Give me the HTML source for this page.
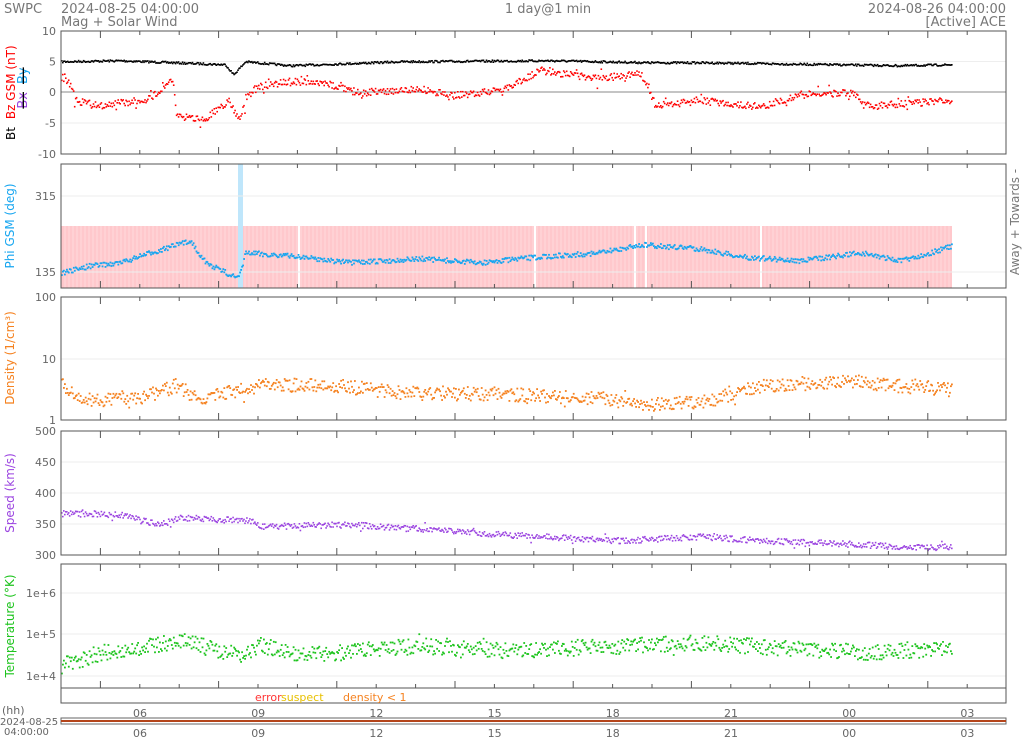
<!DOCTYPE html>
<html><head><meta charset="utf-8"><style>
html,body{margin:0;padding:0;background:#fff;width:1024px;height:741px;overflow:hidden}
svg{display:block;font-family:"DejaVu Sans","Liberation Sans",sans-serif}
</style></head><body>
<svg id="s" width="1024" height="741" xmlns="http://www.w3.org/2000/svg">
<g font-size="13" fill="#777">
<text x="4" y="13">SWPC</text>
<text x="61" y="13">2024-08-25 04:00:00</text>
<text x="61" y="26">Mag + Solar Wind</text>
<text x="548" y="13" text-anchor="middle">1 day@1 min</text>
<text x="1006" y="13" text-anchor="end">2024-08-26 04:00:00</text>
<text x="1006" y="26" text-anchor="end">[Active] ACE</text>
</g>
<g id="g"></g>
</svg>
<script>
var h='';
var X0=61,X1=1006,PH=39.4,XE=952;
var seed=7;function r(){seed=(seed*16807)%2147483647;return seed/2147483647;}
var panels=[[31,154],[164,288],[297,420],[431,555],[564,688]];
function ticks(t,b){var s='';for(var i=0;i<25;i++){var x=X0+i*PH;if(x>X1)break;var L=((i+2)%3==0)?7:4;s+='<line x1="'+x+'" y1="'+t+'" x2="'+x+'" y2="'+(t+L)+'" stroke="#555"/><line x1="'+x+'" y1="'+b+'" x2="'+x+'" y2="'+(b-L)+'" stroke="#555"/>';}return s;}
function hl(y,c){return '<line x1="'+X0+'" y1="'+y+'" x2="'+X1+'" y2="'+y+'" stroke="'+c+'"/>';}
function lab(y,t){return '<text x="56" y="'+(y+4)+'" text-anchor="end" font-size="11" fill="#666">'+t+'</text>';}
h+=hl(61.5,'#eee')+hl(123,'#eee')+hl(92,'#888');
[[31,'10'],[61.5,'5'],[92,'0'],[123,'-5'],[154,'-10']].forEach(function(a){h+=lab(a[0],a[1]);});
h+='<rect x="'+X0+'" y="226" width="'+(XE-X0)+'" height="62" fill="#ffc8cc"/>';
for(var x=X0;x<XE;x+=4)h+='<line x1="'+x+'" y1="226" x2="'+x+'" y2="288" stroke="#ffdadd" stroke-width="1"/>';
[298,534,634,645,760].forEach(function(x){h+='<rect x="'+x+'" y="226" width="2" height="62" fill="#fff"/>';});
h+='<rect x="238" y="164" width="5" height="124" fill="#bfe6fb"/>';
h+=hl(196,'#eee')+hl(272,'#eee');h+=lab(196,'315')+lab(272,'135');
h+=hl(359,'#eee');h+=lab(297,'100')+lab(359,'10')+lab(420,'1');
h+=hl(462,'#eee')+hl(493,'#eee')+hl(524,'#eee');
[[431,'500'],[462,'450'],[493,'400'],[524,'350'],[555,'300']].forEach(function(a){h+=lab(a[0],a[1]);});
h+=hl(593,'#eee')+hl(634,'#eee')+hl(676,'#eee');h+=lab(593,'1e+6')+lab(634,'1e+5')+lab(676,'1e+4');
function dots(fn,c,n,sz,sp){var s='<g fill="'+c+'">';for(var i=0;i<n;i++){var x=X0+(XE-X0)*i/n;var y=fn(x,i);if(y==null)continue;if(sp&&r()<sp){y+=(r()-0.5)*sp*200;}s+='<rect x="'+x.toFixed(1)+'" y="'+y.toFixed(1)+'" width="'+sz+'" height="'+sz+'"/>';}return s+'</g>';}
function pw(pts){return function(x){for(var i=1;i<pts.length;i++){if(x<=pts[i][0]){var a=pts[i-1],b=pts[i];return a[1]+(b[1]-a[1])*(x-a[0])/(b[0]-a[0]);}}return pts[pts.length-1][1];};}
var bt=pw([[61,61],[120,60],[200,63],[225,64],[233,74],[245,61],[290,65],[400,61],[550,60],[650,62],[700,62],[900,65],[952,64]]);
h+=dots(function(x){return bt(x)+(r()-0.5)*2;},'#000',900,1.6);
var bz=pw([[61,78],[70,84],[75,100],[100,105],[150,98],[160,88],[172,78],[176,116],[205,118],[228,100],[238,118],[250,90],[260,86],[290,80],[330,84],[360,92],[420,88],[450,95],[500,90],[540,70],[600,78],[640,72],[655,105],[700,100],[760,106],[800,94],[850,92],[870,106],[900,103],[952,100]]);
h+=dots(function(x){return bz(x)+(r()-0.5)*7;},'#f00',900,1.6,0.08);
var phi=pw([[61,272],[90,265],[120,262],[150,252],[190,240],[205,262],[238,278],[245,252],[300,256],[350,262],[420,258],[480,262],[540,256],[600,252],[640,244],[700,248],[740,256],[800,260],[860,252],[900,260],[930,252],[952,245]]);
h+=dots(function(x){return phi(x)+(r()-0.5)*5;},'#17a6f0',900,1.8);
var den=pw([[61,384],[80,400],[150,395],[175,385],[200,398],[260,385],[330,384],[400,392],[500,393],[600,398],[650,403],[700,402],[760,385],[850,380],[900,385],[952,389]]);
h+=dots(function(x){return den(x)+(r()-0.5)*14;},'#f58220',900,1.8,0.06);
var sp=pw([[61,513],[120,514],[160,524],[180,517],[250,520],[260,526],[350,524],[430,529],[500,534],[560,537],[620,540],[700,536],[760,540],[840,543],[920,547],[952,546]]);
h+=dots(function(x){return sp(x)+(r()-0.5)*6;},'#9b44e0',900,1.6,0.05);
var tp=pw([[61,665],[100,652],[180,640],[240,655],[260,644],[300,655],[420,645],[500,650],[600,646],[700,642],[800,648],[870,652],[952,647]]);
h+=dots(function(x){return tp(x)+(r()-0.5)*16;},'#1ec41e',900,1.8,0.05);
panels.forEach(function(p){h+='<rect x="'+X0+'" y="'+p[0]+'" width="'+(X1-X0)+'" height="'+(p[1]-p[0])+'" fill="none" stroke="#555"/>'+ticks(p[0],p[1]);});
h+='<rect x="'+X0+'" y="688" width="'+(X1-X0)+'" height="15" fill="none" stroke="#555"/>';
h+='<text x="255" y="701" font-size="11" fill="#f33">error</text><text x="281" y="701" font-size="11" fill="#e8c000">suspect</text><text x="343" y="701" font-size="11" fill="#f58220">density &lt; 1</text>';
h+='<rect x="'+X0+'" y="718" width="'+(X1-X0)+'" height="6" fill="#fff" stroke="#666"/><line x1="'+X0+'" y1="721" x2="'+X1+'" y2="721" stroke="#b4441a" stroke-width="2"/>';
['06','09','12','15','18','21','00','03'].forEach(function(t,i){var x=140+i*118.2;h+='<text x="'+x+'" y="717" text-anchor="middle" font-size="11" fill="#666">'+t+'</text><text x="'+x+'" y="737" text-anchor="middle" font-size="11" fill="#666">'+t+'</text>';});
h+='<text x="2" y="714" font-size="11" fill="#666">(hh)</text><text x="0" y="725" font-size="10" fill="#666">2024-08-25</text><text x="4" y="735" font-size="10" fill="#666">04:00:00</text>';
function yt(x,y,c,t){return '<text transform="translate('+x+','+y+') rotate(-90)" text-anchor="middle" font-size="12" fill="'+c+'">'+t+'</text>';}
h+='<text transform="translate(15,140) rotate(-90)" font-size="12"><tspan fill="#000">Bt</tspan><tspan fill="#f00" dx="8">Bz GSM (nT)</tspan></text>';
h+='<text transform="translate(27,88) rotate(-90)" font-size="13" text-anchor="middle" text-decoration="line-through"><tspan fill="#9b44e0">Bx</tspan><tspan fill="#17a6f0" dx="8">By</tspan></text>';
h+=yt(14,226,'#17a6f0','Phi GSM (deg)')+yt(14,358,'#f58220','Density (1/cm³)')+yt(14,493,'#9b44e0','Speed (km/s)')+yt(14,626,'#1ec41e','Temperature (°K)');
h+='<text transform="translate(1019,222) rotate(-90)" text-anchor="middle" font-size="12" fill="#777">Away +   Towards -</text>';
document.getElementById('g').innerHTML=h;
</script>
</body></html>
